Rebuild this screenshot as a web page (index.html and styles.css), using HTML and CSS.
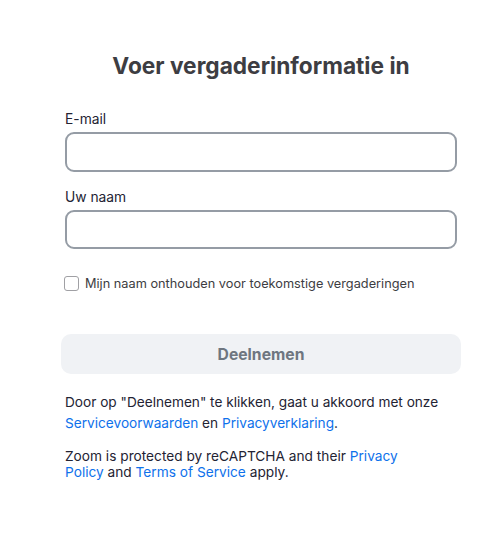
FILE: index.html
```html
<!DOCTYPE html>
<html lang="nl">
<head>
<meta charset="utf-8">
<title>Voer vergaderinformatie in</title>
<link rel="stylesheet" href="styles.css">
</head>
<body>
<main class="page">
  <h1 class="title">Voer vergaderinformatie in</h1>
  <form class="form">
    <div class="field">
      <label class="label" for="email">E-mail</label>
      <input class="input" id="email" type="text">
    </div>
    <div class="field">
      <label class="label" for="name">Uw naam</label>
      <input class="input" id="name" type="text">
    </div>
    <label class="remember">
      <span class="box"></span>
      <span>Mijn naam onthouden voor toekomstige vergaderingen</span>
    </label>
    <button class="join" type="button">Deelnemen</button>
  </form>
  <p class="terms">Door op "Deelnemen" te klikken, gaat u akkoord met onze <a href="#">Servicevoorwaarden</a> en <a href="#">Privacyverklaring</a>.</p>
  <p class="captcha">Zoom is protected by reCAPTCHA and their <a href="#">Privacy Policy</a> and <a href="#">Terms of Service</a> apply.</p>
</main>
</body>
</html>
```
FILE: styles.css
```css
html, body {
  margin: 0;
  background: #ffffff;
}
body {
  font-family: Inter, "Noto Sans", sans-serif;
  color: #232333;
}
.page {
  width: 400px;
  padding: 50px 0 0 61px;
}
.title {
  margin: 0 0 28px;
  font-size: 22.7px;
  line-height: 32px;
  font-weight: 700;
  color: #3d3d42;
  text-align: center;
}
.form {
  display: flex;
  flex-direction: column;
  padding-left: 4px;
}
.field {
  display: flex;
  flex-direction: column;
  margin-bottom: 16px;
}
.label {
  font-size: 13.8px;
  line-height: 18px;
  margin-bottom: 4px;
}
.input {
  box-sizing: border-box;
  width: 392px;
  height: 39.5px;
  border: 2px solid #959ca5;
  border-radius: 9px;
  background: #fff;
  margin: 0;
}
.remember {
  display: flex;
  align-items: center;
  gap: 6px;
  font-size: 12.75px;
  color: #3d3d42;
  margin-top: 11px;
}
.box {
  box-sizing: border-box;
  width: 15px;
  height: 15px;
  border: 1px solid #a0a0a4;
  border-radius: 3px;
  margin-left: -1px;
}
.join {
  margin: 43px 0 0 -4px;
  width: 400px;
  height: 40px;
  border: 0;
  border-radius: 10px;
  background: #f0f2f5;
  color: #6e7680;
  font-family: inherit;
  font-size: 15.7px;
  font-weight: 700;
}
.terms, .captcha {
  margin: 0;
  padding-left: 4px;
}
.terms {
  margin-top: 18px;
  font-size: 13.65px;
  line-height: 21px;
}
.captcha {
  margin-top: 14px;
  font-size: 13.7px;
  line-height: 16px;
  max-width: 345px;
}
a {
  color: #0e71eb;
  text-decoration: none;
}
```
